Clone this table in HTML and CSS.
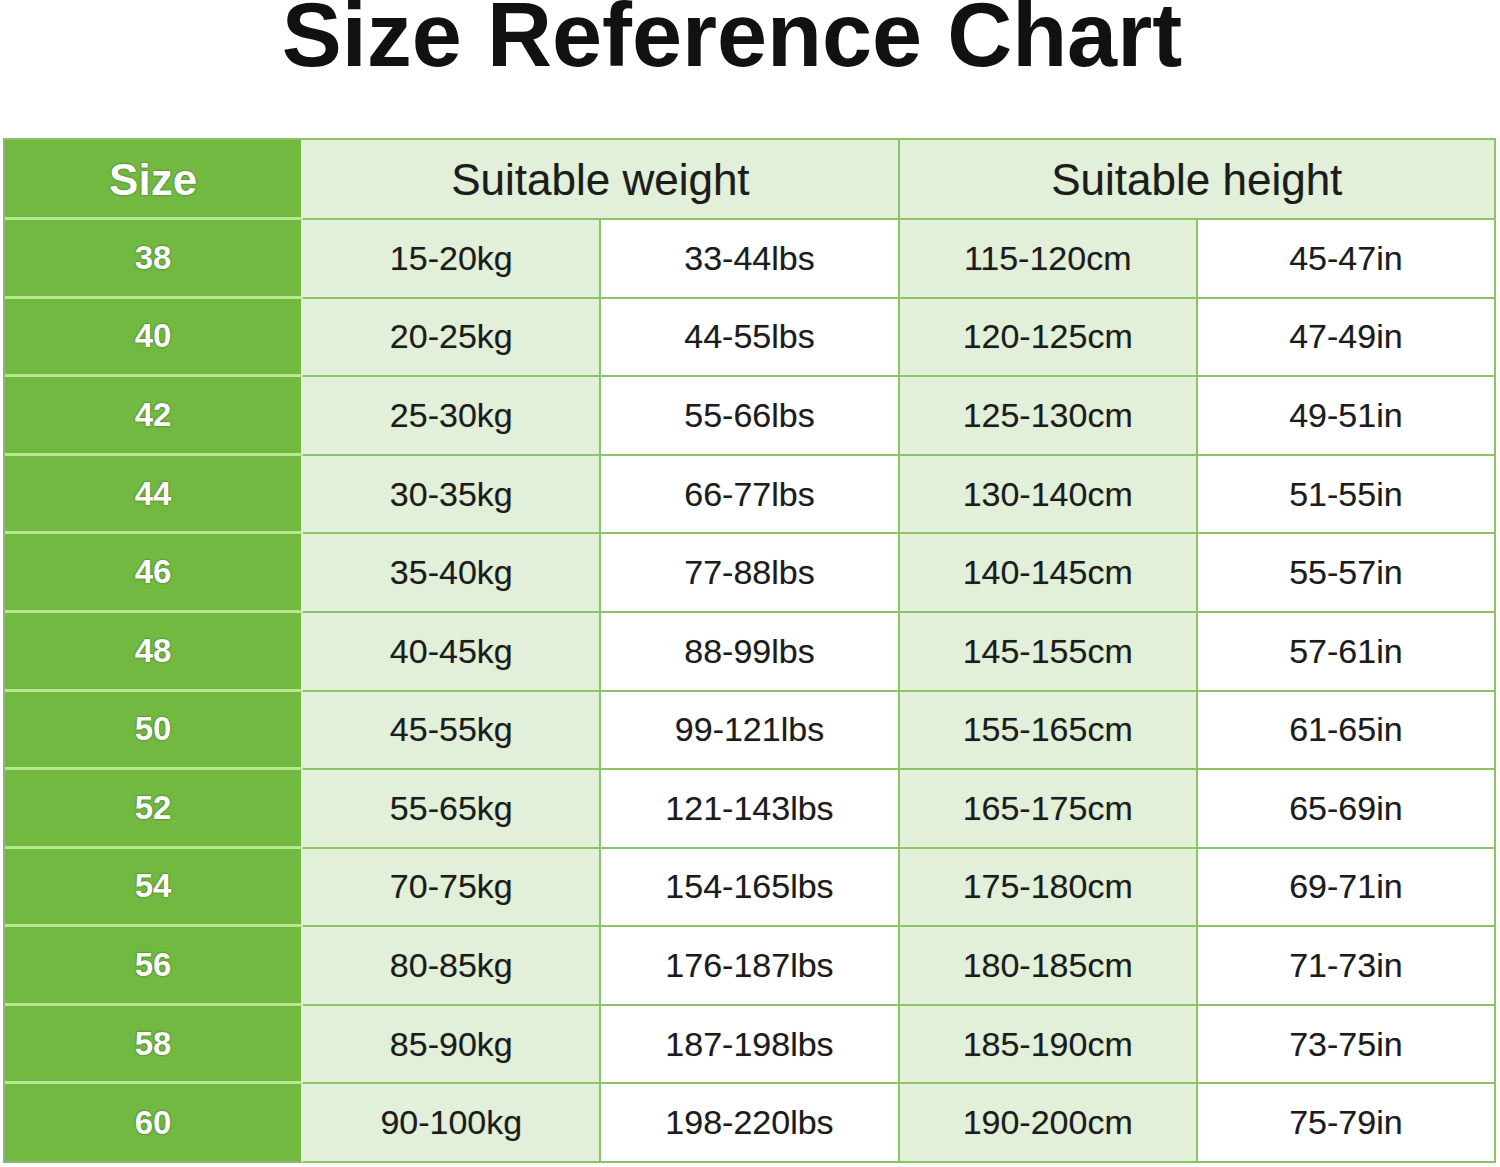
FILE: index.html
```html
<!DOCTYPE html>
<html>
<head>
<meta charset="utf-8">
<link rel="stylesheet" href="styles.css">
</head>
<body>
<h1 class="title">Size Reference Chart</h1>
<div class="chart">
  <div class="cell size head">Size</div>
  <div class="cell tint head wide">Suitable weight</div>
  <div class="cell tint head wide last">Suitable height</div>

  <div class="cell size">38</div><div class="cell tint">15-20kg</div><div class="cell">33-44lbs</div><div class="cell tint">115-120cm</div><div class="cell last">45-47in</div>
  <div class="cell size">40</div><div class="cell tint">20-25kg</div><div class="cell">44-55lbs</div><div class="cell tint">120-125cm</div><div class="cell last">47-49in</div>
  <div class="cell size">42</div><div class="cell tint">25-30kg</div><div class="cell">55-66lbs</div><div class="cell tint">125-130cm</div><div class="cell last">49-51in</div>
  <div class="cell size">44</div><div class="cell tint">30-35kg</div><div class="cell">66-77lbs</div><div class="cell tint">130-140cm</div><div class="cell last">51-55in</div>
  <div class="cell size">46</div><div class="cell tint">35-40kg</div><div class="cell">77-88lbs</div><div class="cell tint">140-145cm</div><div class="cell last">55-57in</div>
  <div class="cell size">48</div><div class="cell tint">40-45kg</div><div class="cell">88-99lbs</div><div class="cell tint">145-155cm</div><div class="cell last">57-61in</div>
  <div class="cell size">50</div><div class="cell tint">45-55kg</div><div class="cell">99-121lbs</div><div class="cell tint">155-165cm</div><div class="cell last">61-65in</div>
  <div class="cell size">52</div><div class="cell tint">55-65kg</div><div class="cell">121-143lbs</div><div class="cell tint">165-175cm</div><div class="cell last">65-69in</div>
  <div class="cell size">54</div><div class="cell tint">70-75kg</div><div class="cell">154-165lbs</div><div class="cell tint">175-180cm</div><div class="cell last">69-71in</div>
  <div class="cell size">56</div><div class="cell tint">80-85kg</div><div class="cell">176-187lbs</div><div class="cell tint">180-185cm</div><div class="cell last">71-73in</div>
  <div class="cell size">58</div><div class="cell tint">85-90kg</div><div class="cell">187-198lbs</div><div class="cell tint">185-190cm</div><div class="cell last">73-75in</div>
  <div class="cell size bottom">60</div><div class="cell tint bottom">90-100kg</div><div class="cell bottom">198-220lbs</div><div class="cell tint bottom">190-200cm</div><div class="cell last bottom">75-79in</div>
</div>
</body>
</html>
```
FILE: styles.css
```css
html, body {
  margin: 0;
  padding: 0;
  background: #ffffff;
}

body {
  width: 1500px;
  height: 1167px;
  overflow: hidden;
  font-family: "Liberation Sans", Arial, sans-serif;
}

.title {
  margin: 0;
  height: 138px;
  box-sizing: border-box;
  padding-right: 36px;
  padding-top: 0;
  text-align: center;
  font-size: 90px;
  line-height: 71px;
  font-weight: bold;
  color: #111111;
  letter-spacing: 0;
}

.chart {
  margin-left: 3px;
  width: 1493px;
  height: 1025px;
  display: grid;
  grid-template-columns: repeat(5, 1fr);
  grid-template-rows: 80px repeat(12, 1fr);
  border-top: 2px solid #8cc463;
  border-left: 2px solid #8fb37a;
  box-sizing: border-box;
}

.cell {
  display: flex;
  align-items: center;
  justify-content: center;
  background: #ffffff;
  border-right: 2px solid #8cc463;
  border-bottom: 2px solid #8cc463;
  font-size: 34px;
  color: #1c1c1c;
  text-shadow: 0 0 1px rgba(0, 0, 0, 0.25);
}

.cell.tint {
  background: #e3f0d9;
}

.cell.size {
  background: #71b941;
  color: #ffffff;
  font-weight: bold;
  font-size: 33px;
  border-bottom: 3px solid #b6e88f;
  border-right: 2px solid #e3f0d9;
  text-shadow: 0 0 2px rgba(40, 70, 20, 0.9);
}

.cell.size.bottom {
  border-bottom: 2px solid #8fb37a;
}

.cell.head {
  font-size: 44px;
  padding-top: 2px;
}

.cell.size.head {
  font-size: 44px;
}

.cell.head.wide {
  grid-column: span 2;
  background: #e3f0d9;
}
```
